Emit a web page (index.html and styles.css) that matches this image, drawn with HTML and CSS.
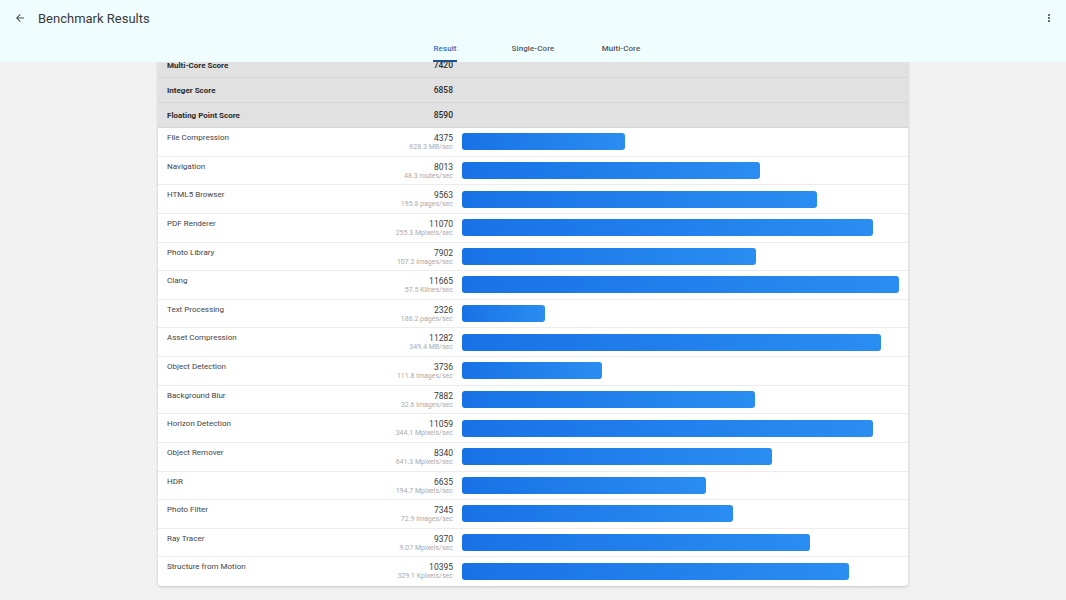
FILE: index.html
```html
<!DOCTYPE html>
<html>
<head>
<meta charset="utf-8">
<link rel="stylesheet" href="styles.css">
</head>
<body>
<div class="app">
  <header class="appbar">
    <div class="topbar">
      <svg class="icon-back" width="12" height="12" viewBox="0 0 24 24"><path d="M20 11H7.83l5.59-5.59L12 4l-8 8 8 8 1.41-1.41L7.83 13H20v-2z" fill="#4a4a4a"/></svg>
      <div class="title">Benchmark Results</div>
      <svg class="icon-more" width="12" height="12" viewBox="0 0 24 24"><path d="M12 8c1.1 0 2-.9 2-2s-.9-2-2-2-2 .9-2 2 .9 2 2 2zm0 2c-1.1 0-2 .9-2 2s.9 2 2 2 2-.9 2-2-.9-2-2-2zm0 6c-1.1 0-2 .9-2 2s.9 2 2 2 2-.9 2-2-.9-2-2-2z" fill="#4a4a4a"/></svg>
    </div>
    <nav class="tabs">
      <div class="tab active"><span>Result</span></div>
      <div class="tab"><span>Single-Core</span></div>
      <div class="tab"><span>Multi-Core</span></div>
    </nav>
  </header>
  <main class="content">
    <section class="card">
      <div class="sum-row"><span class="sum-name">Multi-Core Score</span><span class="sum-score">7420</span></div>
      <div class="sum-row"><span class="sum-name">Integer Score</span><span class="sum-score">6858</span></div>
      <div class="sum-row"><span class="sum-name">Floating Point Score</span><span class="sum-score">8590</span></div>

      <div class="row"><div class="info"><div class="name">File Compression</div><div class="vals"><div class="score">4375</div><div class="unit">628.3 MB/sec</div></div></div><div class="track"><div class="bar" style="width:37.11%"></div></div></div>
      <div class="row"><div class="info"><div class="name">Navigation</div><div class="vals"><div class="score">8013</div><div class="unit">48.3 routes/sec</div></div></div><div class="track"><div class="bar" style="width:67.96%"></div></div></div>
      <div class="row"><div class="info"><div class="name">HTML5 Browser</div><div class="vals"><div class="score">9563</div><div class="unit">195.8 pages/sec</div></div></div><div class="track"><div class="bar" style="width:81.11%"></div></div></div>
      <div class="row"><div class="info"><div class="name">PDF Renderer</div><div class="vals"><div class="score">11070</div><div class="unit">255.3 Mpixels/sec</div></div></div><div class="track"><div class="bar" style="width:93.89%"></div></div></div>
      <div class="row"><div class="info"><div class="name">Photo Library</div><div class="vals"><div class="score">7902</div><div class="unit">107.2 images/sec</div></div></div><div class="track"><div class="bar" style="width:67.02%"></div></div></div>
      <div class="row"><div class="info"><div class="name">Clang</div><div class="vals"><div class="score">11665</div><div class="unit">57.5 Klines/sec</div></div></div><div class="track"><div class="bar" style="width:99.8%"></div></div></div>
      <div class="row"><div class="info"><div class="name">Text Processing</div><div class="vals"><div class="score">2326</div><div class="unit">186.2 pages/sec</div></div></div><div class="track"><div class="bar" style="width:18.9%"></div></div></div>
      <div class="row"><div class="info"><div class="name">Asset Compression</div><div class="vals"><div class="score">11282</div><div class="unit">349.4 MB/sec</div></div></div><div class="track"><div class="bar" style="width:95.69%"></div></div></div>
      <div class="row"><div class="info"><div class="name">Object Detection</div><div class="vals"><div class="score">3736</div><div class="unit">111.8 images/sec</div></div></div><div class="track"><div class="bar" style="width:31.9%"></div></div></div>
      <div class="row"><div class="info"><div class="name">Background Blur</div><div class="vals"><div class="score">7882</div><div class="unit">32.6 images/sec</div></div></div><div class="track"><div class="bar" style="width:66.85%"></div></div></div>
      <div class="row"><div class="info"><div class="name">Horizon Detection</div><div class="vals"><div class="score">11059</div><div class="unit">344.1 Mpixels/sec</div></div></div><div class="track"><div class="bar" style="width:93.8%"></div></div></div>
      <div class="row"><div class="info"><div class="name">Object Remover</div><div class="vals"><div class="score">8340</div><div class="unit">641.3 Mpixels/sec</div></div></div><div class="track"><div class="bar" style="width:70.74%"></div></div></div>
      <div class="row"><div class="info"><div class="name">HDR</div><div class="vals"><div class="score">6635</div><div class="unit">194.7 Mpixels/sec</div></div></div><div class="track"><div class="bar" style="width:55.8%"></div></div></div>
      <div class="row"><div class="info"><div class="name">Photo Filter</div><div class="vals"><div class="score">7345</div><div class="unit">72.9 images/sec</div></div></div><div class="track"><div class="bar" style="width:61.8%"></div></div></div>
      <div class="row"><div class="info"><div class="name">Ray Tracer</div><div class="vals"><div class="score">9370</div><div class="unit">9.07 Mpixels/sec</div></div></div><div class="track"><div class="bar" style="width:79.47%"></div></div></div>
      <div class="row"><div class="info"><div class="name">Structure from Motion</div><div class="vals"><div class="score">10395</div><div class="unit">329.1 Kpixels/sec</div></div></div><div class="track"><div class="bar" style="width:88.4%"></div></div></div>
    </section>
  </main>
</div>
</body>
</html>
```
FILE: styles.css
```css
* { box-sizing: border-box; }
html, body { margin: 0; padding: 0; }
body {
  width: 1066px;
  height: 600px;
  overflow: hidden;
  background: #f1f1f1;
  font-family: Roboto, "Liberation Sans", sans-serif;
  color: #333;
}
.app {
  display: flex;
  flex-direction: column;
  height: 600px;
}
.appbar {
  height: 62px;
  flex: none;
  background: #f0fdff;
  display: flex;
  flex-direction: column;
  position: relative;
  z-index: 2;
}
.topbar {
  height: 36px;
  flex: none;
  display: flex;
  align-items: center;
  padding: 0 11px 0 14px;
}
.icon-back { flex: none; }
.title {
  margin-left: 12px;
  font-size: 13px;
  color: #3a3a3a;
  flex: 1;
}
.icon-more { flex: none; }
.tabs {
  flex: 1;
  min-height: 0;
  display: flex;
  justify-content: center;
}
.tab {
  width: 88px;
  display: flex;
  justify-content: center;
  align-items: flex-start;
  padding-top: 8px;
  font-size: 8px;
  font-weight: 500;
  color: #555;
  letter-spacing: 0.1px;
}
.tab span {
  display: block;
  height: 18px;
}
.tab.active { color: #2f6fbf; }
.tab.active span {
  border-bottom: 2px solid #1d4f93;
}
.content {
  flex: 1;
  overflow: hidden;
  display: flex;
  justify-content: center;
}
.card {
  width: 750px;
  margin-top: -9px;
  align-self: flex-start;
  background: #fff;
  border-radius: 4px;
  box-shadow: 0 1px 3px rgba(0,0,0,0.18);
  overflow: hidden;
}
.sum-row {
  height: 25px;
  background: #e1e1e1;
  border-bottom: 1px solid #d4d4d4;
  display: flex;
  align-items: center;
  padding: 0 9px;
  font-size: 8px;
  font-weight: 700;
  color: #2b2b2b;
}
.sum-name { flex: 1; }
.sum-score {
  margin-right: 446px;
  font-weight: 500;
  font-size: 8.5px;
}
.row {
  height: 28.625px;
  display: flex;
  align-items: center;
  padding: 0 8px 0 9px;
  border-bottom: 1px solid #ececec;
}
.row:last-child { border-bottom: none; }
.info {
  width: 286px;
  flex: none;
  align-self: stretch;
  display: flex;
  justify-content: space-between;
  padding-top: 5px;
}
.name {
  font-size: 8px;
  color: #444;
}
.vals { text-align: right; }
.score {
  font-size: 8.5px;
  color: #3a3a3a;
  line-height: 10px;
}
.unit {
  font-size: 7px;
  color: #aaa;
  line-height: 9px;
}
.track {
  margin-left: 9px;
  flex: 1;
  height: 17px;
}
.bar {
  height: 100%;
  border-radius: 3px;
  background: linear-gradient(90deg, #1872e6, #2a8df1);
}
```
